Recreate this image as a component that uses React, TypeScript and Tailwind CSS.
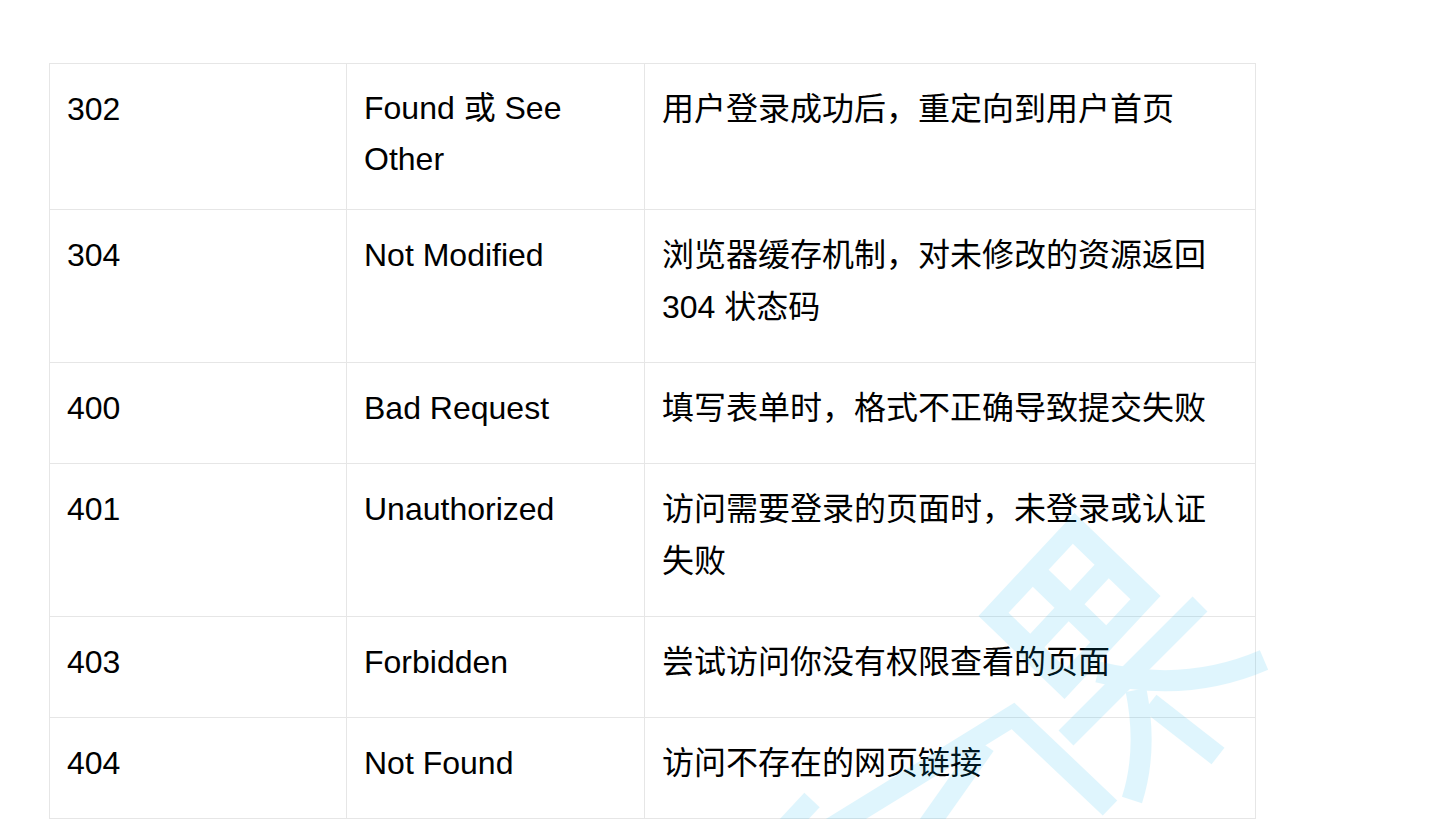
const rows = [
  {
    code: "302",
    name: "Found 或 See Other",
    scene: "用户登录成功后，重定向到用户首页",
    tight: true,
  },
  {
    code: "304",
    name: "Not Modified",
    scene: "浏览器缓存机制，对未修改的资源返回 304 状态码",
  },
  {
    code: "400",
    name: "Bad Request",
    scene: "填写表单时，格式不正确导致提交失败",
  },
  {
    code: "401",
    name: "Unauthorized",
    scene: "访问需要登录的页面时，未登录或认证失败",
  },
  {
    code: "403",
    name: "Forbidden",
    scene: "尝试访问你没有权限查看的页面",
  },
  {
    code: "404",
    name: "Not Found",
    scene: "访问不存在的网页链接",
  },
];

const base = "border-r border-b border-[#e6e6e6] pl-[17px] pt-[19px]";
const normal = "pb-[29px] leading-[52px]";

const Watermark = () => (
  <svg
    className="pointer-events-none absolute inset-0"
    width="1435"
    height="819"
    viewBox="0 0 1435 819"
  >
    <g opacity="0.12" fill="#00b4f0" stroke="#00b4f0">
      <path
        stroke="none"
        fillRule="evenodd"
        transform="matrix(43 41.5 -48 51.5 1069.5 606)"
        d="M-1 -1H1V1H-1Z M-0.67 -0.67H-0.165V-0.165H-0.67Z M0.165 -0.67H0.67V-0.165H0.165Z M-0.67 0.165H-0.165V0.67H-0.67Z M0.165 0.165H0.67V0.67H0.165Z"
      />
      <g fill="none" strokeWidth="21">
        <path d="M1200 604 L1066 738" />
        <path d="M1098 672 Q1185 694 1264 660" />
        <path d="M1136 690 Q1148 750 1132 800" />
        <path d="M1150 703 L1218 756" />
        <path d="M828 830 L1013 716 L1110 808" />
        <path d="M985 745 L925 830" />
        <path d="M812 800 L784 830" />
      </g>
    </g>
  </svg>
);

const App = () => {
  return (
    <div className="relative h-[819px] w-[1435px] overflow-hidden bg-white font-['Liberation_Sans','Noto_Sans_CJK_SC',sans-serif] text-[32px] text-black">
      <div className="ml-[49px] mt-[63px] grid w-[1207px] grid-cols-[297px_298px_611px] border-l border-t border-[#e6e6e6]">
        {rows.map((row) => (
          <div key={row.code} className="contents">
            <div className={`${base} ${normal} pr-4`}>{row.code}</div>
            <div
              className={`${base} pr-4 ${
                row.tight ? "pb-[24px] leading-[51px]" : normal
              }`}
            >
              {row.name}
            </div>
            <div className={`${base} ${normal} pr-[40px]`}>{row.scene}</div>
          </div>
        ))}
      </div>
      <Watermark />
    </div>
  );
};

export default App;
